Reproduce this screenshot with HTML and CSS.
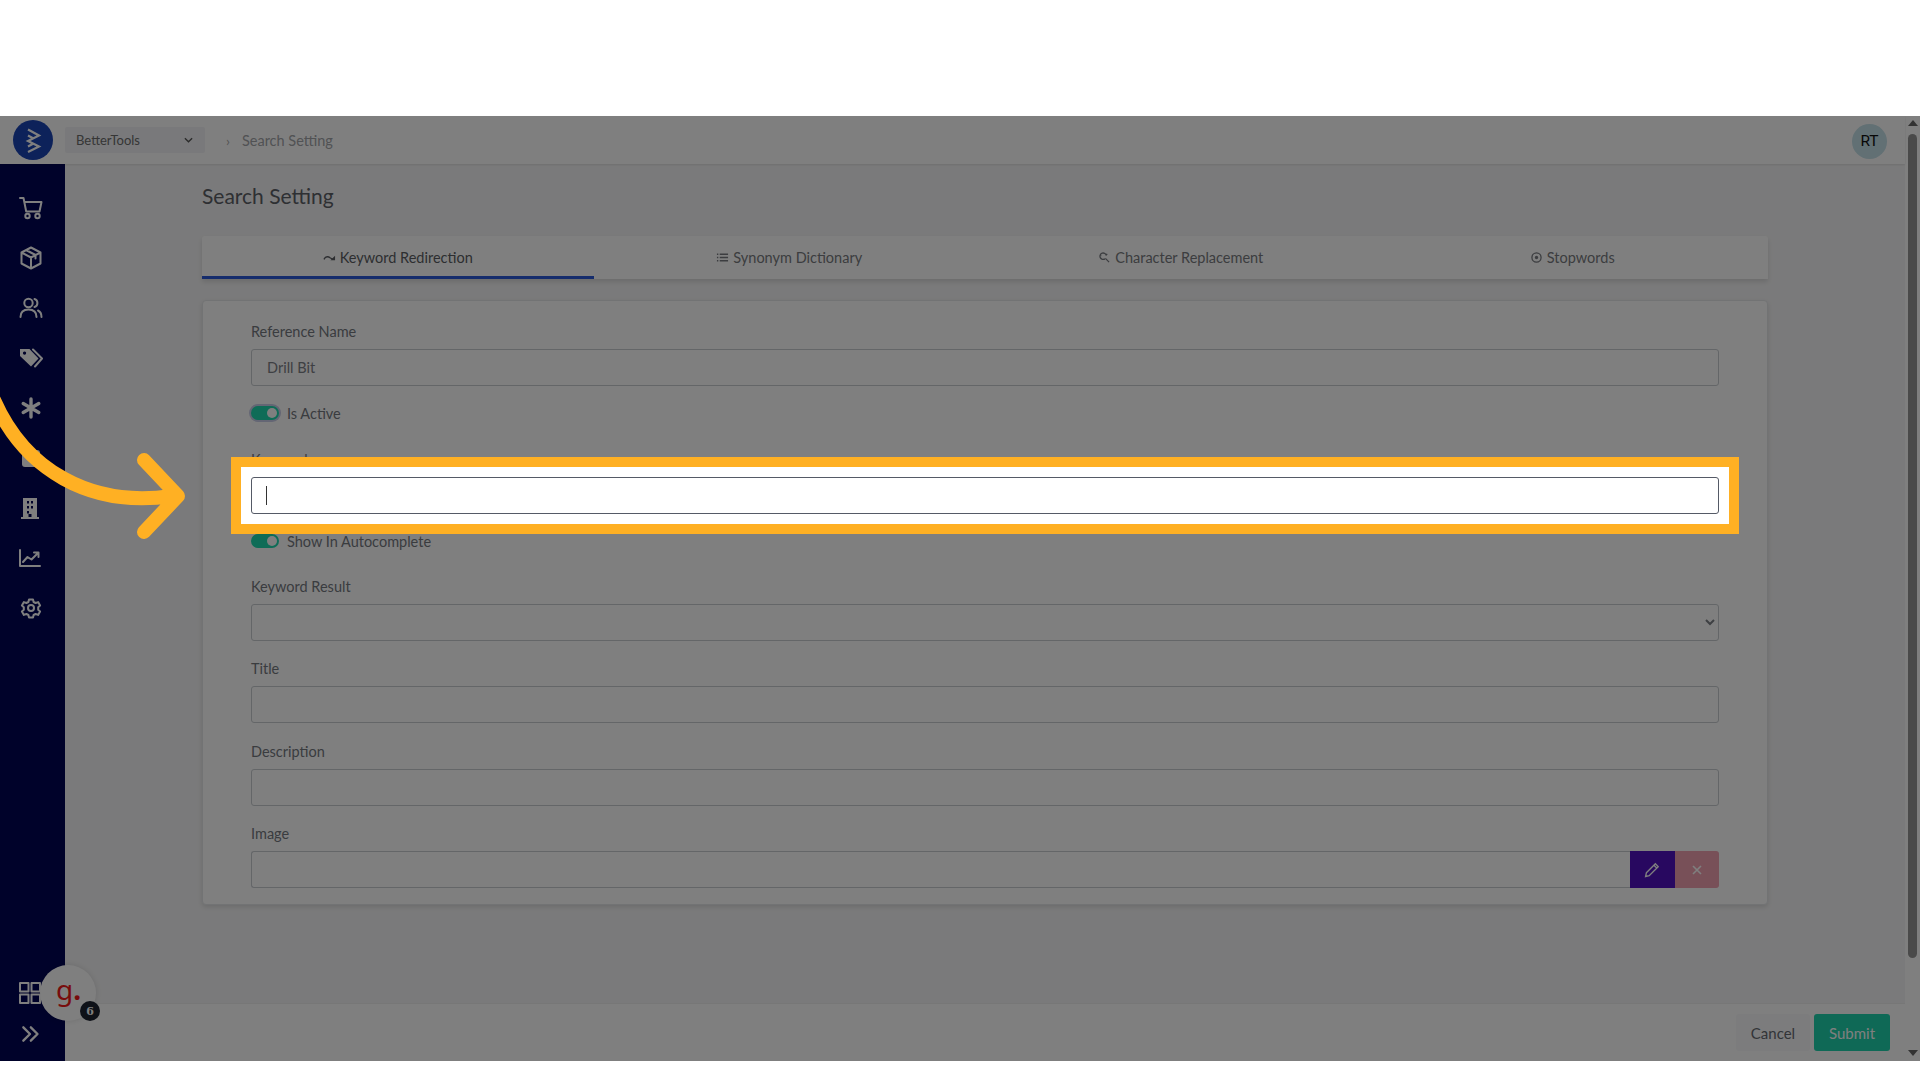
FILE: index.html
```html
<!DOCTYPE html>
<html lang="en">
<head>
<meta charset="utf-8">
<title>Search Setting</title>
<link rel="stylesheet" href="styles.css">
</head>
<body>
<div class="frame">
  <div class="app">
    <header class="topbar">
      <div class="logo-wrap">
        <svg class="logo" viewBox="0 0 40 40"><circle cx="20" cy="20" r="20" fill="#1a44b4"/><path d="M15 9.500l11 6-11 5.500 11 5.500-11 5.500M15 15.500l5 2.700M15 26.500l5-2.700" fill="none" stroke="#fff" stroke-width="2.200"/></svg>
      </div>
      <div class="store">BetterTools<svg class="chev" viewBox="0 0 10 6"><path d="M1 1l4 4 4-4" fill="none" stroke="#555" stroke-width="1.500"/></svg></div>
      <span class="crumb-sep">›</span>
      <span class="crumb">Search Setting</span>
      <span class="avatar">RT</span>
    </header>
    <div class="body">
      <nav class="sidebar">
        <div class="nav-top">
          <svg class="ico" viewBox="0 0 24 24"><path d="M1 2h3.500l2.700 13.500h13.300L22.500 6H5.400"/><circle cx="8.500" cy="20" r="2.200"/><circle cx="18.500" cy="20" r="2.200"/></svg>
          <svg class="ico" viewBox="0 0 24 24"><path d="M12 1.500l9.500 5v11l-9.500 5-9.500-5v-11zM2.500 6.500l9.500 5 9.500-5M12 11.500v11M7 4l9.500 5v3.500"/></svg>
          <svg class="ico" viewBox="0 0 24 24"><circle cx="9.500" cy="7" r="4.200"/><path d="M1.500 21c0-5 3-7.500 8-7.500s8 2.500 8 7.500M15.500 3a4.200 4.200 0 0 1 0 8M19 14.500c2.500 1.200 3.500 3.500 3.500 6.500"/></svg>
          <svg class="ico" viewBox="0 0 24 24"><path class="solid" d="M1 3h9.500l9 9.500-7.500 8L1 10zM5.500 5.500a1.600 1.600 0 1 0 .1 0z"/><path d="M14 3.500l9 9-7 8"/></svg>
          <svg class="ico ico-thick" viewBox="0 0 24 24"><path d="M12 3v18M4.200 7.500l15.600 9M19.800 7.500l-15.600 9"/></svg>
          <svg class="ico" viewBox="0 0 24 24"><path class="solid" d="M4 4h14a3 3 0 0 1 3 3v14H6a3 3 0 0 1-3-3V5z"/></svg>
          <svg class="ico ico-shift" viewBox="0 0 24 24"><path class="solid" d="M5 2h14v19h2v2H3v-2h2zM9 5v2.500h2V5zM13 5v2.500h2V5zM9 10v2.500h2V10zM13 10v2.500h2V10zM9 15v2.500h2V15zM13 15v0h2v0zM10.500 18v3h3v-3z"/></svg>
          <svg class="ico ico-shift" viewBox="0 0 24 24"><path d="M2 4v16h20M5 16l4.500-5 4 2.500 6-6M16 6.500h4.500V11"/></svg>
          <svg class="ico" viewBox="0 0 24 24"><circle cx="12" cy="12" r="3"/><path d="M10 3.500h4l.6 2.500 2 1 2.500-.9 2 3.400-1.900 1.700v2.600l1.900 1.700-2 3.400-2.500-.9-2 1-.6 2.500h-4l-.6-2.500-2-1-2.500.9-2-3.400 1.900-1.700v-2.600L2.900 9.500l2-3.400 2.500.9 2-1z"/></svg>
        </div>
        <div class="nav-bottom">
          <svg class="ico ico-shift" viewBox="0 0 24 24"><path d="M2 2h8.500v8.500H2zM13.500 2H22v8.500h-8.500zM2 13.500h8.500V22H2zM13.500 13.500H22V22h-8.500z"/></svg>
          <svg class="ico ico-small" viewBox="0 0 24 24"><path d="M4 4l8 8-8 8M13 4l8 8-8 8"/></svg>
        </div>
      </nav>
      <div class="main">
        <div class="content">
          <h1 class="title">Search Setting</h1>
          <div class="tabs">
            <div class="tab active"><svg class="tab-ico" viewBox="0 0 14 10"><path d="M1 7c2-4 5-3 7-1.500L11 7"/><path class="fill" d="M13 3v5H8z"/></svg>Keyword Redirection</div>
            <div class="tab"><svg class="tab-ico" viewBox="0 0 14 10"><path class="thick" d="M1 1.500h1.500M4 1.500h9M1 5h1.500M4 5h9M1 8.500h1.500M4 8.500h9"/></svg>Synonym Dictionary</div>
            <div class="tab"><svg class="tab-ico" viewBox="0 0 12 12"><path d="M8 4a3.500 3.500 0 1 0-1.500 3.500M7 7l4 4M2 4h.5M9 2l-1 1"/></svg>Character Replacement</div>
            <div class="tab"><svg class="tab-ico" viewBox="0 0 12 12"><circle cx="6" cy="6" r="5"/><circle class="fill" cx="6" cy="6" r="1.800"/></svg>Stopwords</div>
          </div>
          <form class="card">
            <label class="label" for="ref">Reference Name</label>
            <input class="input" id="ref" value="Drill Bit">
            <div class="switch-row first"><span class="switch focus"></span>Is Active</div>
            <label class="label kw" for="kw">Keywords</label>
            <input class="input" id="kw">
            <div class="switch-row second"><span class="switch"></span>Show In Autocomplete</div>
            <label class="label result" for="res">Keyword Result</label>
            <select class="input" id="res"><option></option></select>
            <label class="label gap" for="ttl">Title</label>
            <input class="input" id="ttl">
            <label class="label gap wide" for="dsc">Description</label>
            <input class="input" id="dsc">
            <label class="label gap" for="img">Image</label>
            <div class="image-row">
              <input class="input image-input" id="img">
              <span class="btn-edit"><svg viewBox="0 0 16 16"><path d="M3 10.500L11 2.500l2.500 2.500-8 8-3.200.8zM9.700 3.800l2.500 2.500"/></svg></span>
              <span class="btn-del"><svg viewBox="0 0 12 12"><path d="M2 2l8 8M10 2l-8 8"/></svg></span>
            </div>
          </form>
        </div>
        <footer class="footer">
          <span class="btn cancel">Cancel</span>
          <span class="btn submit">Submit</span>
        </footer>
      </div>
    </div>
  </div>
  <div class="scrollbar">
    <span class="arrow up"></span>
    <span class="thumb"></span>
    <span class="arrow down"></span>
  </div>
  <div class="bubble">g<span class="dot">.</span></div>
  <div class="badge">6</div>
  <div class="dim"></div>
</div>
<div class="spot"><div class="spot-input"><span class="caret"></span></div></div>
<svg class="pointer" viewBox="0 0 200 160"><path d="M-6 0C25 70 90 108 172 96M144 60l34 36-34 36"/></svg>
</body>
</html>
```
FILE: styles.css
```css
* { box-sizing: border-box; }
html, body { margin: 0; height: 100%; overflow: hidden; background: #fff; }
body { font-family: "Lato", "Noto Sans", sans-serif; color: #74787e; position: relative; }
.frame { position: relative; margin-top: 116px; height: 945px; display: flex; }
.app { flex: 1; min-width: 0; display: flex; flex-direction: column; background: #fff; }
.topbar { height: 48px; display: flex; align-items: center; background: #fff; box-shadow: 0 1px 2px rgba(0,0,0,.1); position: relative; z-index: 1; }
.logo-wrap { width: 65px; display: flex; justify-content: center; padding-left: 1px; }
.logo { width: 40px; height: 40px; display: block; }
.store { width: 140px; height: 26px; background: #f2f3f6; display: flex; align-items: center; justify-content: space-between; padding: 0 12px 0 11px; font-size: 13px; color: #6c6c6c; border-radius: 2px; }
.chev { width: 9px; height: 6px; }
.crumb-sep { margin: 0 12px 0 21px; color: #aaa; font-size: 14px; }
.crumb { font-size: 14.500px; color: #a2a4a8; }
.avatar { margin-left: auto; margin-right: 18px; margin-top: 2px; width: 35px; height: 35px; border-radius: 50%; background: #c4e0e8; color: #111; display: flex; align-items: center; justify-content: center; font-size: 15.500px; font-family: "Roboto", sans-serif; }
.body { flex: 1; min-height: 0; display: flex; }
.sidebar { width: 65px; background: #000554; display: flex; flex-direction: column; justify-content: space-between; align-items: center; padding: 32px 3px 17px 0; }
.nav-top { display: flex; flex-direction: column; align-items: center; gap: 26px; }
.nav-bottom { display: flex; flex-direction: column; align-items: center; gap: 19px; }
.ico { width: 24px; height: 24px; display: block; fill: none; stroke: #fff; stroke-width: 2; stroke-linejoin: round; stroke-linecap: round; }
.ico .solid { fill: #fff; fill-rule: evenodd; stroke: none; }
.ico-thick { stroke-width: 3.400; }
.ico-shift { margin-left: -2px; }
.ico-small { width: 20px; height: 20px; stroke-width: 2.800; margin-left: -2px; }
.main { flex: 1; min-width: 0; display: flex; flex-direction: column; background: #f5f5f6; }
.content { flex: 1; padding: 20px 137px 0; }
.title { margin: 0 0 28px; font-size: 21px; line-height: 24px; font-weight: 400; color: #5c6066; }
.tabs { display: flex; height: 43px; background: #fff; border-radius: 3px 3px 0 0; box-shadow: 0 3px 5px rgba(0,0,0,.12); margin-bottom: 21px; }
.tab { flex: 1; display: flex; align-items: center; justify-content: center; gap: 4px; font-size: 14.500px; color: #787b80; padding: 2px 0 2px; }
.tab.active { color: #5a5d62; border-bottom: 3px solid #2a58d8; padding: 2px 0 0; }
.tab-ico { width: 13px; height: 11px; fill: none; stroke: currentColor; stroke-width: 1.400; }
.tab-ico .fill { fill: currentColor; stroke: none; }
.tab-ico .thick { stroke-width: 1.800; }
.card { height: 605px; background: #fff; border: 1px solid #e4e6e9; border-radius: 4px; box-shadow: 0 2px 5px rgba(0,0,0,.12); padding: 20px 48px 0; }
.label { display: block; height: 20px; line-height: 22px; font-size: 14.500px; color: #74787e; margin-bottom: 8px; }
.input { display: block; width: 100%; height: 37px; padding: 0 15px; border: 1px solid #c8ccd0; border-radius: 3px; background: #fff; font: 14.500px "Lato", sans-serif; color: #7c8086; outline: 0; }
.switch-row { height: 24px; display: flex; align-items: center; gap: 8px; font-size: 14.500px; color: #74787e; margin-top: 15px; }
.switch { width: 28px; height: 14px; border-radius: 7px; background: #1ed8ae; position: relative; display: block; }
.switch::after { content: ""; position: absolute; right: 2px; top: 2px; width: 10px; height: 10px; border-radius: 50%; background: #fff; }
.switch.focus { box-shadow: 0 0 0 2px #c8cce8; }
.kw { margin-top: 24px; }
.second { margin-top: 15px; }
.result { margin-top: 23px; }
.gap { margin-top: 17px; }
.wide { margin-top: 18px; }
.image-row { display: flex; }
.image-input { flex: 1; min-width: 0; border-radius: 3px 0 0 3px; border-right: 0; }
.btn-edit, .btn-del { width: 44.500px; height: 37px; display: flex; align-items: center; justify-content: center; }
.btn-edit { background: #5010c0; }
.btn-del { background: #f0a0b0; border-radius: 0 3px 3px 0; }
.btn-edit svg { width: 18px; height: 18px; fill: none; stroke: #fff; stroke-width: 1.200; }
.btn-del svg { width: 12px; height: 12px; fill: none; stroke: #fff; stroke-width: 1.600; }
.footer { height: 58px; display: flex; justify-content: flex-end; align-items: center; gap: 4px; padding: 0 15px 0 0; background: #fff; border-top: 1px solid #eee; }
.btn { height: 37px; display: flex; align-items: center; justify-content: center; border-radius: 3px; font-size: 15px; }
.cancel { width: 74px; background: #f8f9fb; color: #666a70; }
.submit { width: 76px; background: #1ed2ac; color: #ffffff; }
.scrollbar { width: 15px; background: #fff; position: relative; display: flex; flex-direction: column; align-items: center; padding-top: 4px; }
.arrow { width: 0; height: 0; border-left: 5px solid transparent; border-right: 5px solid transparent; position: relative; }
.up { border-bottom: 6px solid #666; }
.thumb { width: 9px; height: 824px; margin-top: 8px; border-radius: 5px; background: #959595; }
.down { border-top: 6px solid #666; margin-top: auto; margin-bottom: 5px; }
.bubble { position: absolute; left: 40px; top: 849px; width: 56px; height: 56px; border-radius: 50%; background: #fff; box-shadow: 0 0 6px rgba(0,0,0,.12); display: flex; align-items: center; justify-content: center; font: 28px "Noto Sans", sans-serif; color: #f01818; padding: 0 0 8px 1px; }
.dot { margin-left: 0; font-weight: 700; }
.badge { position: absolute; left: 80px; top: 885px; width: 20px; height: 20px; border-radius: 50%; background: #1c2230; color: #fff; font: 700 11px "DejaVu Serif", serif; display: flex; align-items: center; justify-content: center; z-index: 2; }
.dim { position: absolute; inset: 0; background: rgba(0,0,0,.5); z-index: 3; }
.spot { position: absolute; left: 231px; top: 457px; width: 1508px; height: 77px; background: #fff; border: 10px solid #ffb023; padding: 10px; z-index: 4; }
.spot-input { height: 37px; border: 1px solid #555a66; border-radius: 3px; background: #fff; padding: 8px 14px; }
.caret { display: block; width: 1px; height: 19px; background: #333; }
.pointer { position: absolute; left: 0; top: 400px; width: 200px; height: 160px; overflow: visible; fill: none; stroke: #ffb023; stroke-width: 14; stroke-linecap: round; stroke-linejoin: round; z-index: 5; }
```
